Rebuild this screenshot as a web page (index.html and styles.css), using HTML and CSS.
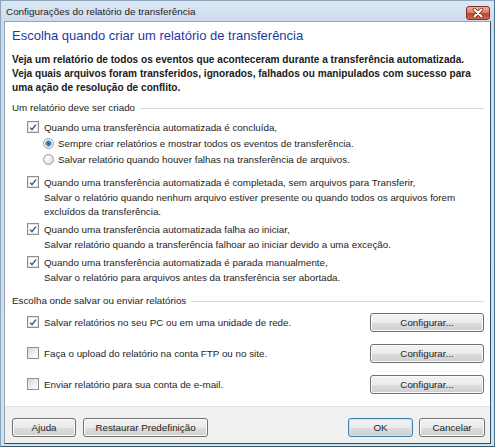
FILE: index.html
```html
<!DOCTYPE html>
<html>
<head>
    <title>Configurações do relatório de transferência</title>
    <link rel="stylesheet" href="styles.css">
</head>
<body>
    <div class="window">
        <!-- barra de título -->
        <div class="titlebar">
            <span class="title">Configurações do relatório de transferência</span>
            <span class="close">
                <svg width="14" height="10" viewBox="0 0 14 10">
                    <path d="M3.5 1.5 L10.5 8.5 M10.5 1.5 L3.5 8.5" stroke="#6b2a1f" stroke-width="3.4" stroke-linecap="round"/>
                    <path d="M3.5 1.5 L10.5 8.5 M10.5 1.5 L3.5 8.5" stroke="#ffffff" stroke-width="2" stroke-linecap="round"/>
                </svg>
            </span>
        </div>

        <div class="client">
            <div class="content">
                <h1>Escolha quando criar um relatório de transferência</h1>
                <p class="intro">Veja um relatório de todos os eventos que aconteceram durante a transferência automatizada. Veja quais arquivos foram transferidos, ignorados, falhados ou manipulados com sucesso para uma ação de resolução de conflito.</p>

                <div class="group-title">Um relatório deve ser criado</div>

                <div class="item first">
                    <div class="opt"><span class="cb on"><svg width="11" height="11" viewBox="0 0 11 11"><path d="M2.3 5.6 L4.4 8 L8.7 2.4" fill="none" stroke="#2b4f96" stroke-width="1.5"/></svg></span>Quando uma transferência automatizada é concluída,</div>
                    <div class="radio"><span class="rb on"></span>Sempre criar relatórios e mostrar todos os eventos de transferência.</div>
                    <div class="radio"><span class="rb"></span>Salvar relatório quando houver falhas na transferência de arquivos.</div>
                </div>

                <div class="item second">
                    <div class="opt"><span class="cb on"><svg width="11" height="11" viewBox="0 0 11 11"><path d="M2.3 5.6 L4.4 8 L8.7 2.4" fill="none" stroke="#2b4f96" stroke-width="1.5"/></svg></span>Quando uma transferência automatizada é completada, sem arquivos para Transferir,</div>
                    <div class="desc">Salvar o relatório quando nenhum arquivo estiver presente ou quando todos os arquivos forem excluídos da transferência.</div>
                </div>

                <div class="item">
                    <div class="opt"><span class="cb on"><svg width="11" height="11" viewBox="0 0 11 11"><path d="M2.3 5.6 L4.4 8 L8.7 2.4" fill="none" stroke="#2b4f96" stroke-width="1.5"/></svg></span>Quando uma transferência automatizada falha ao iniciar,</div>
                    <div class="desc">Salvar relatório quando a transferência falhoar ao iniciar devido a uma exceção.</div>
                </div>

                <div class="item">
                    <div class="opt"><span class="cb on"><svg width="11" height="11" viewBox="0 0 11 11"><path d="M2.3 5.6 L4.4 8 L8.7 2.4" fill="none" stroke="#2b4f96" stroke-width="1.5"/></svg></span>Quando uma transferência automatizada é parada manualmente,</div>
                    <div class="desc">Salvar o relatório para arquivos antes da transferência ser abortada.</div>
                </div>

                <div class="group-title second-group">Escolha onde salvar ou enviar relatórios</div>

                <div class="dest first">
                    <div class="opt"><span class="cb on"><svg width="11" height="11" viewBox="0 0 11 11"><path d="M2.3 5.6 L4.4 8 L8.7 2.4" fill="none" stroke="#2b4f96" stroke-width="1.5"/></svg></span>Salvar relatórios no seu PC ou em uma unidade de rede.</div>
                    <button class="btn config">Configurar...</button>
                </div>
                <div class="dest">
                    <div class="opt"><span class="cb"></span>Faça o upload do relatório na conta FTP ou no site.</div>
                    <button class="btn config">Configurar...</button>
                </div>
                <div class="dest">
                    <div class="opt"><span class="cb"></span>Enviar relatório para sua conta de e-mail.</div>
                    <button class="btn config">Configurar...</button>
                </div>
            </div>

            <!-- botões de baixo -->
            <div class="footer">
                <button class="btn help">Ajuda</button>
                <button class="btn restore">Restaurar Predefinição</button>
                <span class="spacer"></span>
                <button class="btn ok">OK</button>
                <button class="btn cancel">Cancelar</button>
            </div>
        </div>
    </div>
</body>
</html>
```

FILE: styles.css
```css
html, body {
    margin: 0;
    padding: 0;
}

body {
    width: 495px;
    height: 447px;
    font-family: "Liberation Sans", Arial, sans-serif;
    font-size: 9.8px;
    color: #1e1e1e;
    overflow: hidden;
}

.window {
    box-sizing: border-box;
    width: 495px;
    height: 447px;
    display: flex;
    flex-direction: column;
    padding: 0 3px 2px 3px;
    background: linear-gradient(#dde8f4, #cddbeb 20px, #d3e0ee);
    border: 1px solid #8da4bd;
    border-right-color: #4d7189;
    border-bottom-color: #3a5c71;
}

/* barra de título */
.titlebar {
    height: 20px;
    display: flex;
    align-items: center;
    padding-left: 2px;
}

.title {
    flex: 1;
    font-size: 9.9px;
    color: #1c1c1c;
}

.close {
    box-sizing: border-box;
    width: 24px;
    height: 14px;
    margin-right: 1px;
    margin-top: 3px;
    display: flex;
    align-items: center;
    justify-content: center;
    border: 1px solid #7d3023;
    border-radius: 3px;
    background: linear-gradient(#eab1a1, #d9806a 45%, #c2452d 55%, #d2684c);
}

.client {
    flex: 1;
    display: flex;
    flex-direction: column;
    background: #ffffff;
    border: 1px solid #90a5bb;
    border-right-color: #2c5068;
    border-bottom-color: #2c5068;
}

.content {
    flex: 1;
    padding: 6px 6px 0 7px;
}

h1 {
    margin: 0;
    font-size: 13px;
    line-height: 16px;
    font-weight: normal;
    color: #1b3b9f;
}

.intro {
    margin: 9px 0 0 0;
    font-size: 10.1px;
    font-weight: bold;
    line-height: 14px;
    color: #202020;
}

.group-title {
    margin-top: 6px;
    line-height: 14px;
    display: flex;
    align-items: center;
}

.group-title::after {
    content: "";
    flex: 1;
    height: 1px;
    margin-left: 5px;
    background: #d3d9de;
}

.second-group {
    margin-top: 9px;
}

.item {
    margin-top: 2px;
    padding-left: 15px;
}

.item.first {
    margin-top: 4px;
}

.item.second {
    margin-top: 7px;
}

.opt, .radio {
    height: 16px;
    display: flex;
    align-items: center;
}

.radio {
    padding-left: 16px;
}

.desc {
    margin-top: 1px;
    padding-left: 17px;
    line-height: 14px;
    padding-right: 20px;
}

/* caixa de seleção estilo Vista */
.cb {
    box-sizing: border-box;
    width: 12px;
    height: 12px;
    margin-right: 5px;
    border: 1px solid #8f8f8f;
    background: linear-gradient(135deg, #d8d8d8, #f4f4f4 70%, #ffffff);
    display: flex;
    align-items: center;
    justify-content: center;
    flex-shrink: 0;
}

.cb.on {
    background: #ffffff;
    box-shadow: inset 0 0 0 1px #e2e6ea;
}

.cb svg {
    display: block;
}

.rb {
    box-sizing: border-box;
    width: 11px;
    height: 11px;
    margin-right: 4px;
    border-radius: 50%;
    border: 1px solid #9a9a9a;
    background: radial-gradient(circle at 35% 35%, #ffffff, #dcdcdc 80%);
    flex-shrink: 0;
}

.rb.on {
    background: radial-gradient(circle at 50% 50%, #1d5aa6 0, #3b87cf 2px, #86c3ee 3.2px, #ffffff 3.6px, #e6e6e6 100%);
}

.dest {
    margin-top: 11px;
    padding-left: 15px;
    height: 20px;
    display: flex;
    align-items: center;
    justify-content: space-between;
}

.dest.first {
    margin-top: 4px;
}

/* botões */
.btn {
    box-sizing: border-box;
    height: 19px;
    padding: 0;
    font-family: "Liberation Sans", Arial, sans-serif;
    font-size: 9.8px;
    color: #1e1e1e;
    border: 1px solid #707070;
    border-radius: 3px;
    background: linear-gradient(#f3f3f3, #ebebeb 50%, #dddddd 51%, #cfcfcf);
    box-shadow: inset 0 0 0 1px #fbfbfb;
}

.config {
    width: 114px;
}

.footer {
    box-sizing: border-box;
    height: 37px;
    display: flex;
    padding: 11px 5px 0 7px;
    gap: 7px;
    background: #f0f0f0;
    border-top: 1px solid #e2e2e2;
}

.spacer {
    flex: 1;
}

.help {
    width: 64px;
}

.restore {
    width: 125px;
}

.ok {
    width: 65px;
    margin-right: -1px;
    border-color: #3c7fb1;
    box-shadow: inset 0 0 0 1px #c5e6f7;
}

.cancel {
    width: 66px;
}
```
